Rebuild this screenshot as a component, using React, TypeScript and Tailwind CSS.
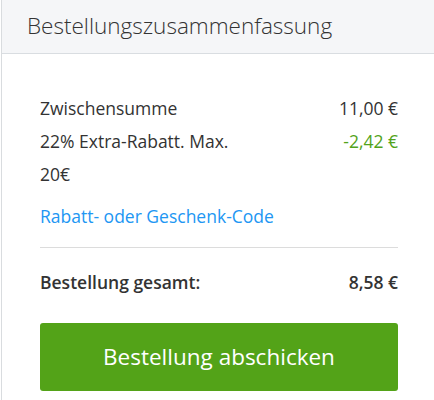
export default function App() {
  return (
    <div className="w-[434px] h-[400px] bg-white overflow-hidden" style={{ fontFamily: '"Open Sans", sans-serif' }}>
      <div className="ml-[1px] border-l border-[#d9dcdf] h-full">
        <div className="h-[54px] bg-[#f5f6f8] border-b border-[#d9dde1] pl-[25px] flex items-center">
          <h2 className="text-[22.5px] font-light text-[#333] leading-none">Bestellungszusammenfassung</h2>
        </div>
        <div className="pl-[38px] pr-[36px] pt-[38px]">
          <div className="flex justify-between text-[17.5px] text-[#333] leading-[33px]">
            <span>Zwischensumme</span>
            <span>11,00 €</span>
          </div>
          <div className="flex justify-between text-[17.5px] leading-[33px]">
            <span className="text-[#333] w-[205px]">22% Extra-Rabatt. Max. 20€</span>
            <span className="text-[#52a31a]">-2,42 €</span>
          </div>
          <div className="mt-[9px] text-[17.5px] leading-[33px] text-[#2196f3]">Rabatt- oder Geschenk-Code</div>
          <div className="mt-[14px] border-t border-[#dcdcdc]" />
          <div className="mt-[18px] flex justify-between text-[17.5px] font-semibold text-[#333] leading-[33px]">
            <span>Bestellung gesamt:</span>
            <span>8,58 €</span>
          </div>
          <button className="mt-[24px] w-full h-[68px] bg-[#53a318] rounded-[3px] text-white text-[22.5px] flex items-center justify-center">
            Bestellung abschicken
          </button>
        </div>
      </div>
    </div>
  );
}
